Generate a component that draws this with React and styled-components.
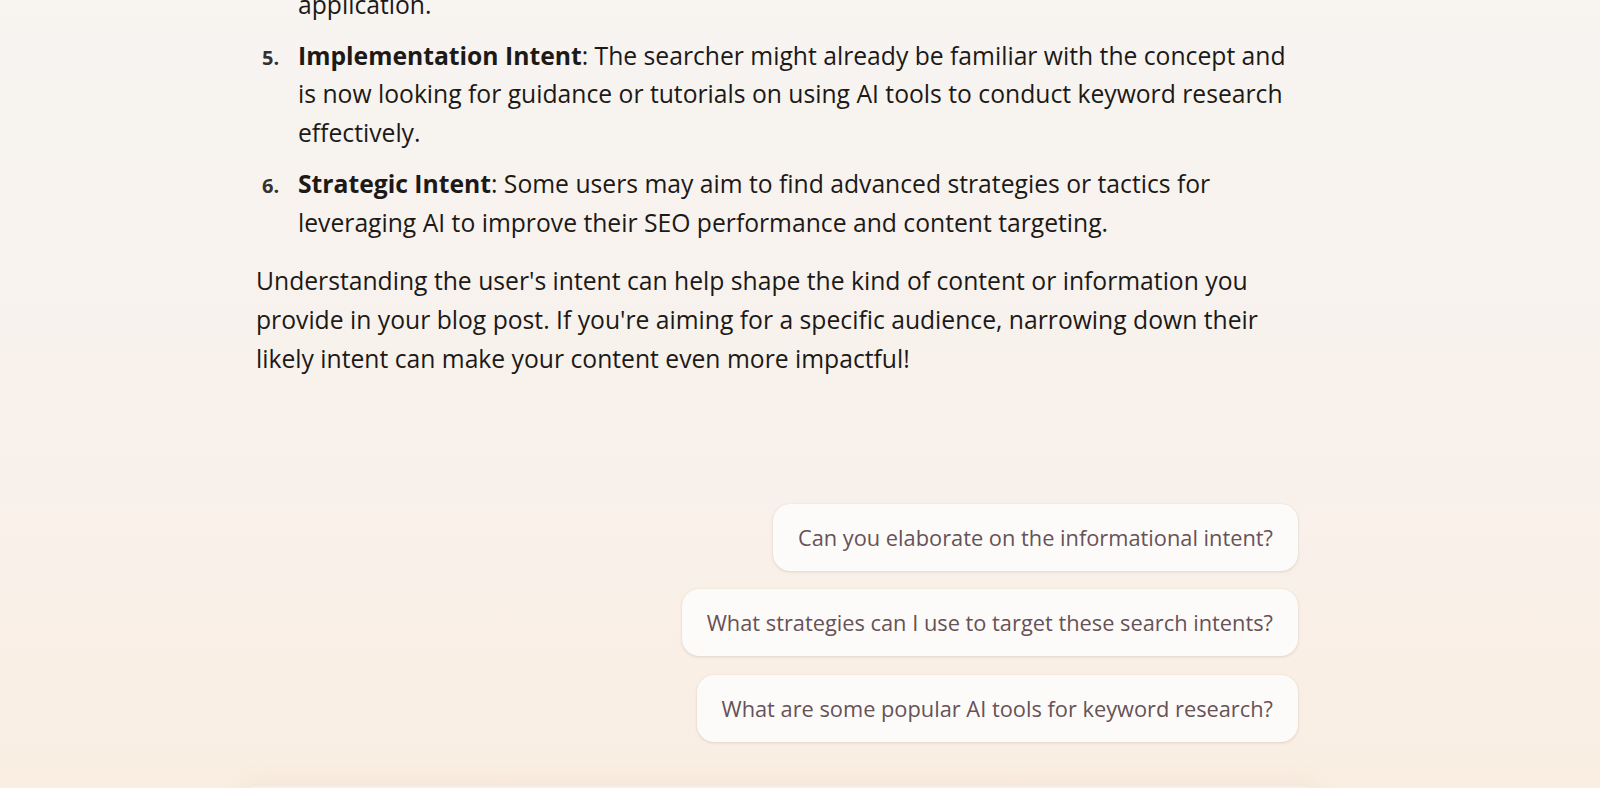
import React from 'react';
import styled, { createGlobalStyle } from 'styled-components';

const Global = createGlobalStyle`
  html, body {
    margin: 0;
    padding: 0;
  }
  body {
    font-family: "Open Sans", Lato, sans-serif;
    -webkit-font-smoothing: antialiased;
  }
`;

const Page = styled.div`
  height: 788px;
  overflow: hidden;
  background: linear-gradient(180deg, #f7f4f1 0%, #f8f1eb 60%, #faeee2 100%);
`;

const Column = styled.div`
  width: 1042px;
  margin-left: 256px;
  display: flex;
  flex-direction: column;
`;

const Message = styled.div`
  margin-top: -53px;
  color: #1c1917;
  font-size: 24.7px;
  line-height: 38.8px;
`;

const List = styled.ol`
  margin: 0;
  padding: 0;
  list-style: none;
  display: flex;
  flex-direction: column;
  gap: 12px;
`;

const Item = styled.li`
  display: grid;
  grid-template-columns: 42px 1fr;
  align-items: baseline;
`;

const Num = styled.span`
  padding-left: 6px;
  font-size: 20px;
  font-weight: 700;
  color: #35312e;
`;

const Para = styled.p`
  margin: 19.6px 0 0;
`;

const Suggestions = styled.div`
  margin-top: 125px;
  display: flex;
  flex-direction: column;
  align-items: flex-end;
  gap: 18.5px;
`;

const Chip = styled.button`
  height: 67px;
  padding: 0 25px;
  border: none;
  border-radius: 17px;
  background: #fdfbf9;
  box-shadow: 0 1px 3px rgba(120, 90, 70, 0.18), 0 0 1px rgba(120, 90, 70, 0.12);
  color: #665257;
  font-family: "Open Sans", Lato, sans-serif;
  font-size: 21.8px;
  cursor: pointer;
`;

const Composer = styled.div`
  margin-top: 44px;
  margin-left: -21px;
  width: 1090px;
  height: 120px;
  border-radius: 24px;
  background: #faefe5;
  box-shadow: 0 -6px 20px rgba(180, 140, 110, 0.08);
`;

const suggestions = [
  'Can you elaborate on the informational intent?',
  'What strategies can I use to target these search intents?',
  'What are some popular AI tools for keyword research?',
];

export default function App() {
  return (
    <>
      <Global />
      <Page>
        <Column>
          <Message>
            <List>
              <Item>
                <Num>4.</Num>
                <div>
                  <strong>Comparative Intent</strong>: Users may compare tools to find the best fit for their
                  <br />
                  application.
                </div>
              </Item>
              <Item>
                <Num>5.</Num>
                <div>
                  <strong>Implementation Intent</strong>: The searcher might already be familiar with the concept
                  and is now looking for guidance or tutorials on using AI tools to conduct keyword research
                  effectively.
                </div>
              </Item>
              <Item>
                <Num>6.</Num>
                <div>
                  <strong>Strategic Intent</strong>: Some users may aim to find advanced strategies or tactics for
                  leveraging AI to improve their SEO performance and content targeting.
                </div>
              </Item>
            </List>
            <Para>
              Understanding the user's intent can help shape the kind of content or information you
              provide in your blog post. If you're aiming for a specific audience, narrowing down their
              likely intent can make your content even more impactful!
            </Para>
          </Message>
          <Suggestions>
            {suggestions.map(s => (
              <Chip key={s}>{s}</Chip>
            ))}
          </Suggestions>
          <Composer />
        </Column>
      </Page>
    </>
  );
}
